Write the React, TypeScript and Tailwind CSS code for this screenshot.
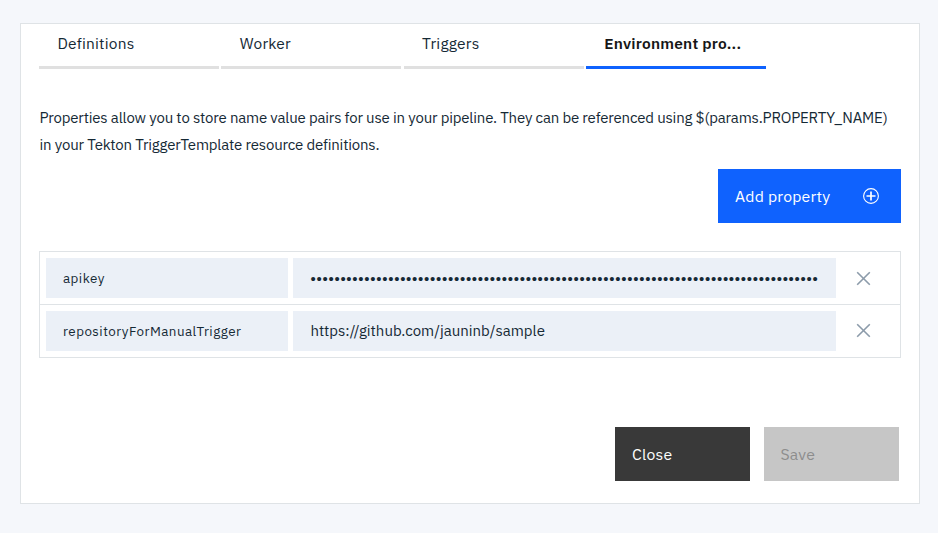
const tabs = ['Definitions', 'Worker', 'Triggers'];

function CloseIcon({ className }: { className: string }) {
  return (
    <svg className={className} width="15" height="15" viewBox="0 0 15 15" fill="none" stroke="#8c9baa" strokeWidth="1.6">
      <path d="M1.2 1.2 13.8 13.8M13.8 1.2 1.2 13.8" />
    </svg>
  );
}

export default function App() {
  return (
    <div className="h-[533px] w-[938px] bg-[#f5f7fb] pt-[23px] pl-5 font-['IBM_Plex_Sans',Roboto,sans-serif] text-[#152935]">
      <main className="h-[481px] w-[900px] border border-[#dfe3e6] bg-white pl-[18px]">
        <nav className="flex h-[45px] gap-[2.33px] text-[15.5px] leading-[39px] tracking-[0.2px]">
          {tabs.map((label) => (
            <div key={label} className="w-[180px] border-b-[3px] border-[#e0e0e0] pl-[18.4px]">
              {label}
            </div>
          ))}
          <div className="w-[180px] border-b-[3px] border-[#0f62fe] pl-[18.2px] font-semibold tracking-[0.22px] text-[#161616]">
            Environment pro...
          </div>
        </nav>

        <p className="mt-[35px] pl-[0.5px] text-[15px] leading-[27px] tracking-[-0.183px] whitespace-nowrap">
          <span className="block">
            Properties allow you to store name value pairs for use in your pipeline. They can be referenced using $(params.PROPERTY_NAME)
          </span>
          <span className="block">in your Tekton TriggerTemplate resource definitions.</span>
        </p>

        <button className="mt-[11px] ml-[679px] flex h-[54px] w-[183px] items-center justify-between bg-[#0f62fe] pr-[22px] pl-[17px] text-[15.8px] tracking-[0.19px] text-white">
          <span className="pt-[2px]">Add property</span>
          <svg width="16" height="16" viewBox="0 0 16 16" fill="none" stroke="currentColor">
            <circle cx="8" cy="8" r="7.4" strokeWidth="1.1" />
            <path d="M8 3.5v9M3.5 8h9" strokeWidth="1.7" />
          </svg>
        </button>

        <div className="mt-7 h-[107px] w-[862px] border border-[#dfe3e6]">
          <div className="flex h-[53px] gap-[5px] border-b border-[#dfe3e6] pt-[6px] pl-[6px]">
            <div className="h-10 w-[242px] bg-[#ebf0f7] pl-[17px] text-[13.4px] leading-[41px] tracking-[0.47px]">apikey</div>
            <div className="h-10 w-[543px] bg-[#ebf0f7] pl-[17.5px] font-['Liberation_Sans'] text-[15px] leading-[41px] tracking-[0.725px] whitespace-nowrap">
              {'•'.repeat(85)}
            </div>
            <CloseIcon className="mt-[13px] ml-[15px]" />
          </div>
          <div className="flex h-[52px] gap-[5px] pt-[6px] pl-[6px]">
            <div className="h-10 w-[242px] bg-[#ebf0f7] pl-[17px] text-[13.4px] leading-[41px] tracking-[0.47px]">repositoryForManualTrigger</div>
            <div className="h-10 w-[543px] bg-[#ebf0f7] pl-[17.4px] text-[15px] leading-10">https://github.com/jauninb/sample</div>
            <CloseIcon className="mt-[12px] ml-[15px]" />
          </div>
        </div>

        <div className="mt-[69px] ml-[576px] flex gap-[14px] text-[15.8px] tracking-[0.19px]">
          <button className="h-[54px] w-[135px] bg-[#393939] pt-[2px] pl-[17px] text-left text-white">Close</button>
          <button className="h-[54px] w-[135px] bg-[#c6c6c6] pt-[2px] pl-[16.5px] text-left text-[#8d8d8d]">Save</button>
        </div>
      </main>
    </div>
  );
}
